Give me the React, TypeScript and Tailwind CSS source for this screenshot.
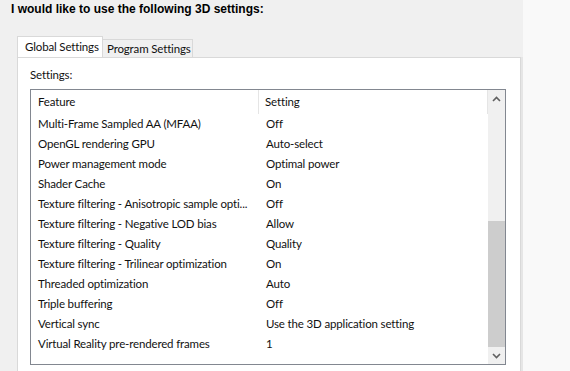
import React from "react";

const rows: [string, string][] = [
  ["Multi-Frame Sampled AA (MFAA)", "Off"],
  ["OpenGL rendering GPU", "Auto-select"],
  ["Power management mode", "Optimal power"],
  ["Shader Cache", "On"],
  ["Texture filtering - Anisotropic sample opti...", "Off"],
  ["Texture filtering - Negative LOD bias", "Allow"],
  ["Texture filtering - Quality", "Quality"],
  ["Texture filtering - Trilinear optimization", "On"],
  ["Threaded optimization", "Auto"],
  ["Triple buffering", "Off"],
  ["Vertical sync", "Use the 3D application setting"],
  ["Virtual Reality pre-rendered frames", "1"],
];

function Chevron({ up }: { up?: boolean }) {
  return (
    <svg width="9" height="6" viewBox="0 0 9 6" className={up ? "" : "rotate-180"}>
      <path d="M1 5 L4.5 1.5 L8 5" fill="none" stroke="#606060" strokeWidth="1.6" />
    </svg>
  );
}

export default function App() {
  return (
    <div className="w-[570px] h-[371px] overflow-hidden bg-[#f0f0f0] text-[11.5px] leading-4 text-[#111] font-['Lato',sans-serif] tracking-[-0.15px] flex">
      <div className="w-[521px] shrink-0 flex flex-col">
        <div className="pl-[11px] pt-[1px] h-[37px] font-bold whitespace-nowrap font-['Liberation_Sans',Arial,sans-serif] text-[12px] tracking-normal text-black">
          I would like to use the following 3D settings:
        </div>

        {/* tabs */}
        <div className="ml-[17px] flex items-end h-[20px] whitespace-nowrap">
          <div className="w-[86px] h-[21px] bg-white border border-b-0 border-[#d9d9d9] pl-[7px] pt-[2px] relative z-10">
            Global Settings
          </div>
          <div className="w-[90px] h-[18px] bg-[#f0f0f0] border border-l-0 border-b-0 border-[#d9d9d9] pl-[4px] pt-[1px]">
            Program Settings
          </div>
        </div>

        {/* panel */}
        <div className="ml-[17px] flex-1 bg-white border border-b-0 border-[#d9d9d9] pl-[12px] pt-[9px]">
          <div className="h-[22px]">Settings:</div>
          <div className="w-[476px] h-[276px] border border-[#828790] flex">
            <div className="flex-1 flex flex-col">
              <div className="h-[24px] flex items-center">
                <div className="w-[228px] h-full flex items-center pl-[7px] border-r border-[#e5e5e5]">Feature</div>
                <div className="flex-1 h-full flex items-center pl-[6px] border-r border-[#e5e5e5]">Setting</div>
              </div>
              {rows.map(([f, s]) => (
                <div key={f} className="h-[20px] flex items-center">
                  <div className="w-[228px] pl-[7px] whitespace-nowrap overflow-hidden">{f}</div>
                  <div className="flex-1 pl-[7px] whitespace-nowrap">{s}</div>
                </div>
              ))}
            </div>
            {/* scrollbar */}
            <div className="w-[17px] bg-[#f0f0f0] flex flex-col">
              <div className="h-[17px] flex items-center justify-center">
                <Chevron up />
              </div>
              <div className="flex-1 flex flex-col">
                <div className="h-[114px]" />
                <div className="flex-1 bg-[#cdcdcd]" />
              </div>
              <div className="h-[17px] flex items-center justify-center">
                <Chevron />
              </div>
            </div>
          </div>
        </div>
      </div>
      <div className="w-[2px] bg-[#e6e6e6] mt-[57px]" />
      <div className="flex-1 bg-[#f9f9f9]" />
    </div>
  );
}
